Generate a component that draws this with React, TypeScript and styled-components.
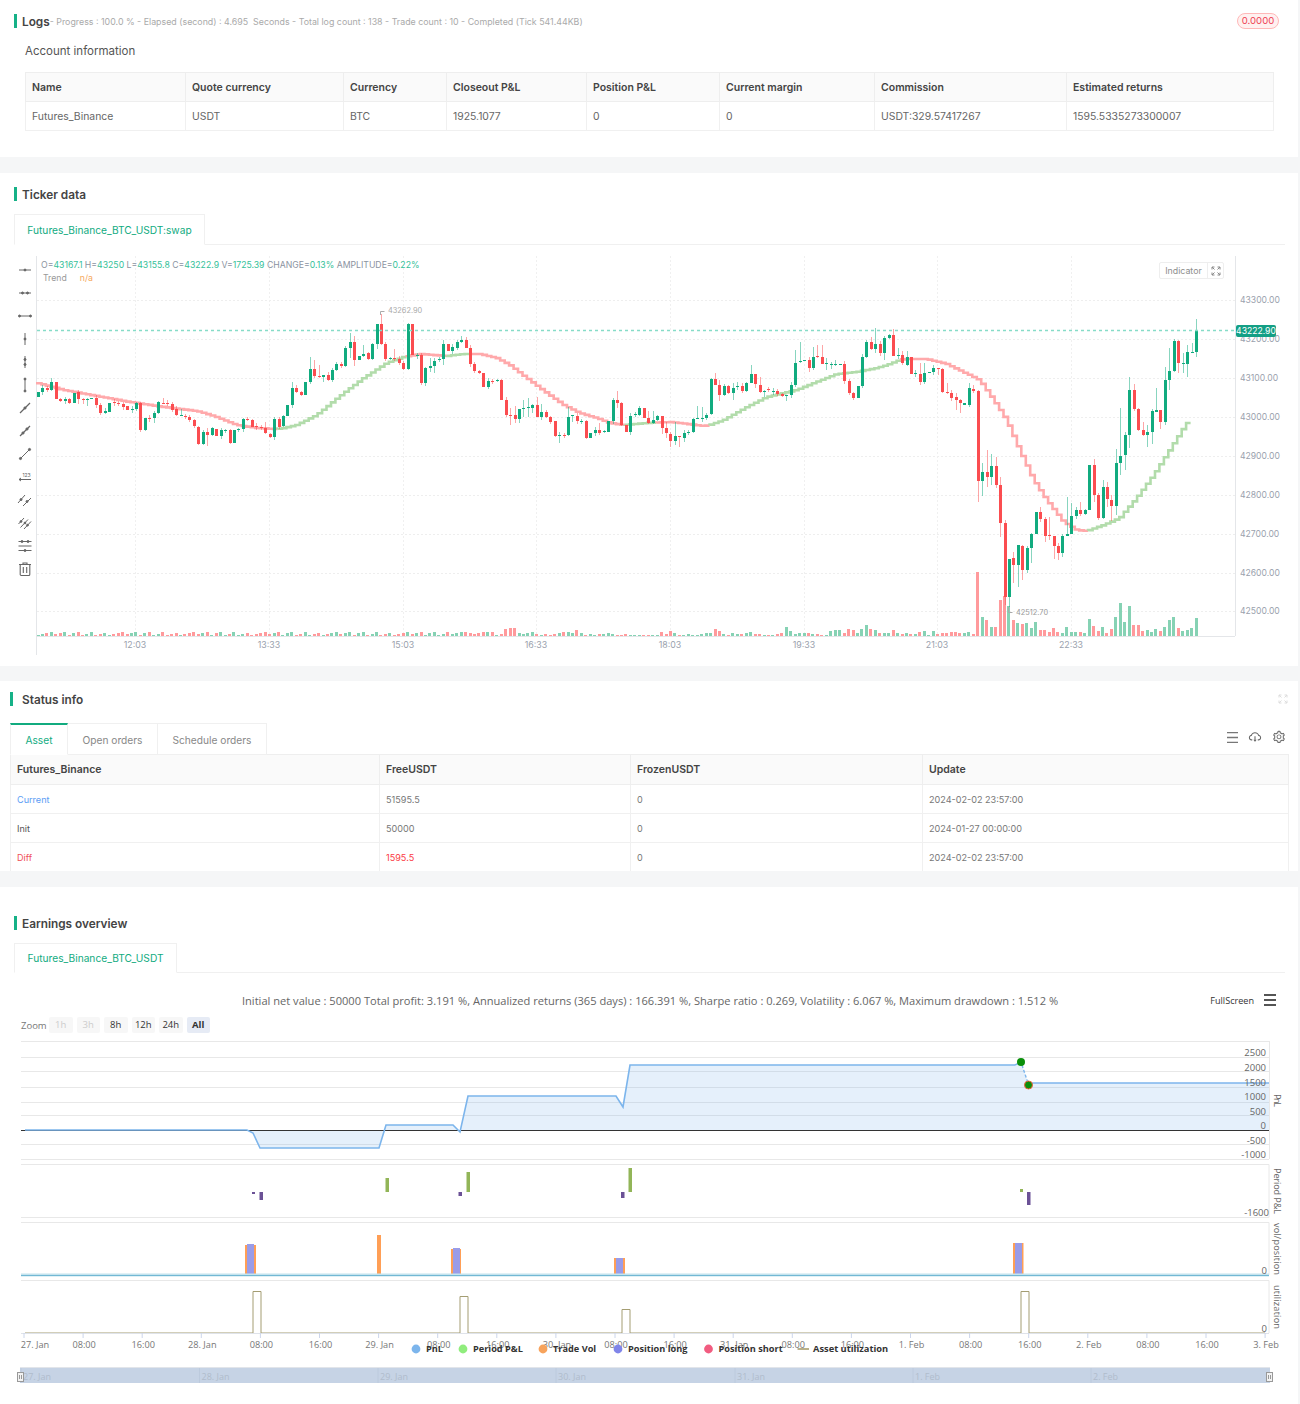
import React from 'react';
import styled, { createGlobalStyle } from 'styled-components';
import { AiOutlineCloudDownload, AiOutlineSetting } from 'react-icons/ai';

const GREEN = '#11ab7f';
const RED = '#fb4d50';
const CHART_FONT = '"Open Sans", "DejaVu Sans", sans-serif';

const GlobalStyle = createGlobalStyle`
  html, body { margin: 0; padding: 0; background: #fff; }
  body { font-family: Inter, "Noto Sans", sans-serif; color: #333; }
`;

/* ---------- candle data, page pixel coordinates: dir top,bottom,wickTop,wickBottom ---------- */
const RAW = `g392,397 g388,392 r388,390 g382,390,378 r382,399 r399,401,398,402 g399,401,397,404 r399,403 g393,403 r392,399,390,404
r399,400,398,404 g399,400,398,406 g398,399 r398,405 r405,413 g411,413,408 g403,412 r402,403 r403,404 r404,407,402,410
r406,410 g409,410 g403,409,402 r403,430,402,432 g418,430,,431 r418,419 g413,418,,423 g402,413 r403,404,398 r403,404,400,406
r404,410,402 r409,415,406,416 g415,416,409 r416,417,414,419 r417,420 r420,426,,428 r427,444,426,445 g432,444,430,445 r432,435,428,446 g428,435,427
r429,436 g430,436,428 g430,431,429 r430,443 g430,443 g429,430,428,432 g419,429,418,432 r419,420,417,421 r420,427,419 r426,427
r427,428 r428,433,422 r434,437,433,438 g419,437,417 r419,427,417 g416,426 g405,416 g388,405,382 r388,392,385,393 r392,395,,396
g382,395 g369,382,357,384 r369,376,360 r376,377,365,378 g375,377,,382 r375,380,,381 g370,380,,382 g364,370,362 r364,366,362,368 g348,366,346,367
g342,348,333,358 r342,360,336,366 g356,360 g354,356,345,357 r353,359,352,360 g344,359,343 g324,344,324,349 r324,344,314,345 r344,359,,361 g358,359
r358,359,349,361 r359,363,,365 r363,369,,370 g324,369 r324,355 g355,356,353 r355,383,,385 g368,383,,386 g366,368,358,372 g361,366,,373
g359,360,,362 g344,359,340,365 r344,351 g347,351 g342,348 g340,342,336 r340,348,337 r348,364 r364,371 r371,373
r373,387 g381,387,,389 r381,382,379 g380,381,379 r380,400,379 r400,415,,417 r415,416,408,425 r415,419,406,423 g409,419,,423 g408,409,400,417
g407,408,398,417 g405,408,,413 r405,417,397 g412,417,404 r412,417,,418 r417,422,,424 r421,436,,437 g435,436,432,443 r435,436,433 g417,435,407
g415,416,,422 r416,421 g421,422 r421,438,420,439 g433,438 g430,433 r430,433,423 g431,432 g421,432,421 g400,421,398
r400,403,391,408 r403,425,,426 r425,432 g416,432 g414,415 g408,415,406 r408,418 r418,423,411,424 g420,423,411,424 g416,420
r416,428,,434 r428,433,422,438 r434,441,,447 g436,441,422,445 r436,437,,447 g433,438,,442 g432,433 g419,432 g418,419,406 g418,419,407
g415,418 g379,414 r379,385,373 r385,395,380,401 g386,395,,396 r386,393 g388,393,383,400 g386,387,382 r386,391,383 g383,391,382
g374,383,365 r374,384,374,388 r385,392,377,393 g391,392,,397 r389,390,387,392 g391,392 r391,394 r394,396 g395,396,,401 g385,395
g363,385,350 g361,362,342,363 g360,361 r360,368,,372 g357,368,347 r356,357,345 r357,364,345 g363,364,358,370 g364,365,,369 g364,365,360
g364,365 r364,381,361 r381,393,,395 r393,398,,400 g386,398 g357,386,,388 g342,357,,358 r342,349,337 g344,349,328,353 r344,353
g338,353,,360 g335,338 r335,356,329 g355,356,348 r355,363,351 g357,365,351 r357,374 g373,374 r374,382,363,385 g373,382,363,384
g372,373 g368,372 r368,369,368,375 r369,392 r392,393,383,394 r393,398 r397,400,393,410 r400,403,,413 g403,405 g388,405,383,407
r389,391,385 r391,481,,502 g472,481,463,496 r472,477,450,487 g466,477,454,485 r466,485,457,488 r485,523,477,537 r523,597,,605 g559,597,559,607 r558,565,552,583
g545,565,,587 r546,570,545,580 g548,570,,573 g534,548,,563 g512,534 r512,519,507 r519,536,,542 r535,536,517,540 r536,546,,559 r546,553,543,560
g536,553,,557 g534,536,497,536 g516,534,503 g510,516 r510,514,502 g510,514 g465,510 r465,495,459,502 r495,518,493 g487,518,480
r487,499,482,507 r500,506,495,521 g463,506,449,515 g456,463,408,475 g435,455,432,470 g390,435,377,448 r390,409,384,411 r409,430 r430,435,422,436 g432,435,425,447
g411,432,,444 g410,412,388,412 r410,422,,429 g380,422,367 g371,380,348,390 g341,371,339 r341,363,340,373 g363,364,353,373 g352,364,345,377 g352,353,343,353
g331,352,319,357`;

const candles = RAW.trim().split(/\s+/).map((token, i) => {
  const [top, bottom, hi, lo] = token.slice(1).split(',');
  return {
    up: token[0] === 'g',
    x: 38 + i * 4.454,
    top: Number(top),
    bottom: Number(bottom),
    hi: hi ? Number(hi) : Number(top) - (i * 7) % 4,
    lo: lo ? Number(lo) : Number(bottom) + (i * 11) % 4,
  };
});

const volMid = [2,3,4,4,3,2,3,4,4,4,1,2,7,8,8,3,2,3,4,2,1,2,1,2,3,4,4,3,6,3,1,2,1,2,2,3,2,1,1,2,1,1,1,1,1,1,1,4,2,5,3,1,1,2,1,1,2,3,3,7,5,2,1,3,2,2,3,4,2,2,1,1,1,2,3,9,5,2,3,3,3,2,2,1,1,5,6,6,3,7];
const volEnd = [6,3,7,11,7,6,3,3,3,6,3,2,3,2,2,4,5,1,5,2,3,3,4,4,3,3,4,2,64,19,16,9,9,36,40,30,16,13,12,13,8,14,6,6,4,8,4,3,9,4,4,4,3,17,10,5,9,3,7,19,33,14,30,11,11,5,6,4,7,5,9,16,19,8,5,6,8,18];
const volumes = candles.map((_, i) => {
  if (i < 93) return 1 + ((i * 5 + (i >> 2)) % 4);
  if (i < 183) return volMid[i - 93] ?? 2;
  return volEnd[i - 183] ?? 2;
});

// trend line key points, page pixels
const trendKeys: [number, number][] = [
  [37,382],[67,390],[133,402],[167,407],[200,411],[217,416],[240,425],[260,428],[280,429],[287,428],[300,425],[320,415],[347,393],[367,378],[390,363],[407,357],
  [423,354],[450,356],[467,354],[483,354],[500,358],[513,365],[530,378],[550,393],[567,405],[583,413],[600,418],[613,423],[627,425],[650,423],[673,422],[683,423],
  [707,426],[713,425],[727,420],[750,407],[770,397],[800,390],[817,383],[840,374],[860,372],[880,368],[890,365],[903,360],[907,359],[930,359],[950,364],[983,380],
  [997,400],[1010,420],[1023,450],[1037,480],[1050,500],[1067,522],[1080,530],[1090,531],[1107,525],[1123,518],[1140,498],[1157,475],[1173,450],[1190,423],
];
const greenParts: [number, number][] = [[280,410],[450,470],[627,660],[710,905],[1090,1191]];

const trendY = (x: number) => {
  for (let k = 1; k < trendKeys.length; k++) {
    const [x0, y0] = trendKeys[k - 1];
    const [x1, y1] = trendKeys[k];
    if (x <= x1) return y0 + ((y1 - y0) * (x - x0)) / (x1 - x0);
  }
  return trendKeys[trendKeys.length - 1][1];
};

const trendParts = (() => {
  const parts: { green: boolean; d: string }[] = [];
  let last: { green: boolean; d: string } | null = null;
  let prevX = 37;
  let prevY = trendY(37);
  for (let x = 37; x < 1191; x += 4.454) {
    const green = greenParts.some(([a, b]) => x >= a && x < b);
    const y = trendY(x);
    if (!last || last.green !== green) {
      last = { green, d: `M${prevX.toFixed(1)} ${prevY.toFixed(1)}` };
      parts.push(last);
    }
    last.d += `V${y.toFixed(1)}H${x.toFixed(1)}`;
    prevX = x;
    prevY = y;
  }
  return parts;
})();

/* ---------- page ---------- */
const Page = styled.div`
  width: 1300px;
  background: #f5f6f7;
`;
const Panel = styled.section<{ $height: number; $gap?: number }>`
  width: 1298px;
  background: #fff;
  height: ${p => p.$height}px;
  margin-bottom: ${p => p.$gap ?? 0}px;
  overflow: hidden;
`;
const TitleRow = styled.div<{ $top: number; $left?: number }>`
  display: flex;
  align-items: center;
  height: 16px;
  margin-top: ${p => p.$top}px;
  padding-left: ${p => p.$left ?? 14}px;
`;
const TitleBar = styled.i<{ $space?: number }>`
  width: 3px;
  height: 14px;
  background: #16b187;
  margin-right: ${p => p.$space ?? 5}px;
`;
const Title = styled.h2`
  margin: 0;
  padding-top: 1px;
  font-size: 11.8px;
  font-weight: 600;
  color: #444;
`;
const Progress = styled.span`
  font-size: 8.85px;
  color: #aaa;
  white-space: pre;
`;
const Badge = styled.span`
  margin-left: auto;
  margin-right: 19px;
  width: 42px;
  height: 16px;
  box-sizing: border-box;
  border: 1px solid #ffb8b8;
  border-radius: 8px;
  background: #fff1f0;
  color: #ee4455;
  font-size: 9.6px;
  line-height: 14px;
  text-align: center;
`;
const SubTitle = styled.div`
  margin: 15px 0 13px 25px;
  font-size: 11.5px;
  line-height: 15px;
  color: #555;
`;
const Table = styled.table<{ $left: number; $width: number }>`
  margin-left: ${p => p.$left}px;
  width: ${p => p.$width}px;
  table-layout: fixed;
  border-collapse: collapse;
`;
const Th = styled.th<{ $height: number }>`
  height: ${p => p.$height}px;
  padding: 0 6px;
  text-align: left;
  font-weight: 600;
  font-size: 10.5px;
  color: #444;
  background: #fafafa;
  border: 1px solid #eee;
`;
const Td = styled.td<{ $height: number; $tone?: string; $size?: number }>`
  height: ${p => p.$height}px;
  padding: 0 6px;
  font-size: ${p => p.$size ?? 10.4}px;
  color: ${p => p.$tone ?? '#666'};
  border: 1px solid #f0f0f0;
`;
const CardTabs = styled.div<{ $top: number }>`
  display: flex;
  margin: ${p => p.$top}px 13px 0 14px;
  border-bottom: 1px solid #f0f0f0;
`;
const CardTab = styled.div<{ $width: number; $height: number; $active?: boolean; $first?: boolean; $line?: boolean; $nudge?: number }>`
  box-sizing: border-box;
  width: ${p => p.$width}px;
  height: ${p => p.$height}px;
  margin-bottom: -1px;
  padding-top: ${p => p.$nudge ?? 0}px;
  display: flex;
  align-items: center;
  justify-content: center;
  font-size: 10.2px;
  color: ${p => (p.$active ? GREEN : '#888')};
  background: #fff;
  border: 1px solid #f0f0f0;
  border-left-width: ${p => (p.$first ? 1 : 0)}px;
  border-top: ${p => (p.$line ? `2px solid ${GREEN}` : '1px solid #f0f0f0')};
  border-bottom-color: ${p => (p.$active ? '#fff' : '#f0f0f0')};
`;

/* ---------- ticker chart ---------- */
const ChartRow = styled.div`
  display: flex;
  padding-left: 14px;
`;
const ToolRail = styled.div`
  width: 22px;
  padding-top: 17px;
  display: flex;
  flex-direction: column;
  align-items: center;
  gap: 7px;
`;
const ToolSvg = styled.svg`
  width: 16px;
  height: 16px;
  flex: none;
  fill: none;
  stroke: #666;
  stroke-width: 1;
`;
const ChartCanvas = styled.div`
  position: relative;
  width: 1248px;
  height: 415px;
`;
const ChartSvg = styled.svg`
  display: block;
  font-family: Inter, sans-serif;
`;
const Ohlc = styled.div`
  position: absolute;
  left: 5px;
  top: 14px;
  font-size: 8.7px;
  line-height: 13px;
  color: #8b93a1;
  white-space: pre;
`;
const OhlcValue = styled.span`
  color: #35c199;
`;
const TrendLabel = styled.div`
  padding-left: 2px;
  color: #999;
`;
const TrendValue = styled.span`
  color: #f5a95c;
  margin-left: 13px;
`;
const IndicatorBox = styled.div`
  position: absolute;
  left: 1123px;
  top: 17px;
  width: 65px;
  height: 17px;
  box-sizing: border-box;
  border: 1px solid #eee;
  border-radius: 2px;
  display: flex;
  align-items: center;
  background: #fff;
  font-size: 8.8px;
  color: #8d8d8d;
`;
const IndicatorText = styled.span`
  width: 47px;
  text-align: center;
  border-right: 1px solid #eee;
  line-height: 15px;
`;
const IndicatorIcon = styled.span`
  display: flex;
  margin-left: 3px;
`;

/* ---------- status ---------- */
const StatusTabRow = styled.div`
  position: relative;
  margin-top: 16px;
  padding-left: 10px;
  display: flex;
`;
const TableTools = styled.div`
  position: absolute;
  right: 12px;
  top: 7px;
  display: flex;
  align-items: center;
  gap: 10px;
  font-size: 14px;
  color: #666;
`;
const FadedExpand = styled.svg`
  margin-left: auto;
  margin-right: 10px;
  width: 10px;
  height: 10px;
  fill: none;
  stroke: #ddd;
`;

/* ---------- earnings ---------- */
const StatRow = styled.div`
  display: grid;
  grid-template-columns: 1fr auto 1fr;
  align-items: center;
  height: 16px;
  margin-top: 19px;
  padding-left: 2px;
  font-family: ${CHART_FONT};
  font-size: 11.1px;
  color: #666;
`;
const FullScreen = styled.div`
  justify-self: end;
  display: flex;
  align-items: center;
  gap: 10px;
  margin-right: 22px;
  font-size: 9.1px;
  color: #333;
`;
const ZoomRow = styled.div`
  display: flex;
  align-items: center;
  gap: 4px;
  height: 16px;
  margin: 9px 0 0 21px;
  font-family: ${CHART_FONT};
  font-size: 9.5px;
  color: #777;
`;
const ZoomLabel = styled.span`
  width: 24px;
`;
const ZoomButton = styled.span<{ $off?: boolean; $on?: boolean }>`
  width: 23.5px;
  height: 16px;
  line-height: 16px;
  text-align: center;
  border-radius: 2px;
  background: ${p => (p.$on ? '#e6ebf5' : '#f7f7f7')};
  color: ${p => (p.$off ? '#ccc' : '#333')};
  font-weight: ${p => (p.$on ? 700 : 400)};
`;
const EarnSvg = styled.svg`
  display: block;
  margin-top: 4px;
  font-family: ${CHART_FONT};
`;

const icons: React.ReactNode[] = [
  <><path d="M2 8h12" /><circle cx="8" cy="8" r="1" fill="#666" /></>,
  <><path d="M2 8h12" /><circle cx="5.5" cy="8" r="1" fill="#666" /><circle cx="10.5" cy="8" r="1" fill="#666" /></>,
  <><path d="M2 8h12" /><circle cx="2.5" cy="8" r="1" fill="#666" /><circle cx="13.5" cy="8" r="1" fill="#666" /></>,
  <><path d="M8 2v12" /><circle cx="8" cy="8" r="1" fill="#666" /></>,
  <><path d="M8 2v12" /><circle cx="8" cy="5.5" r="1" fill="#666" /><circle cx="8" cy="10.5" r="1" fill="#666" /></>,
  <><path d="M8 1.5v13" /><circle cx="8" cy="2" r="1" fill="#666" /><circle cx="8" cy="14" r="1" fill="#666" /></>,
  <><path d="M3 13L13 3" strokeWidth="1.2" /><circle cx="8" cy="8" r="1.1" fill="#666" /></>,
  <><path d="M3 13L13 3" strokeWidth="1.2" /><circle cx="6" cy="10" r="1.1" fill="#666" /><circle cx="10" cy="6" r="1.1" fill="#666" /></>,
  <><path d="M3.5 12.5L12.5 3.5" /><circle cx="3.5" cy="12.5" r="1.1" fill="#666" /><circle cx="12.5" cy="3.5" r="1.1" fill="#666" /></>,
  <><path d="M2 10.5h12M2 10.5l2-1.5M2 10.5l2 1.5" /><text x="5.5" y="7.5" fontSize="5" fill="#666" stroke="none" fontFamily="Inter, sans-serif">123</text></>,
  <><path d="M1 11L8 3M6 14l8-8" /><circle cx="4" cy="7.6" r="1" fill="#666" /><circle cx="10" cy="9.5" r="1" fill="#666" /></>,
  <><path d="M1.5 9L7 3M3.5 12.5L11 4.5M7 14l7-7.5" /><circle cx="4" cy="6.5" r=".9" fill="#666" /><circle cx="8" cy="8" r=".9" fill="#666" /><circle cx="10.5" cy="10.2" r=".9" fill="#666" /></>,
  <><path d="M1.5 3.5h13M1.5 8h13M1.5 12.5h13" /><circle cx="5" cy="3.5" r="1" fill="#666" /><circle cx="11" cy="3.5" r="1" fill="#666" /><circle cx="8" cy="12.5" r="1" fill="#666" /></>,
  <><path d="M2 3.5h12M6 3.5V2h4v1.5M3.2 3.5v10a1 1 0 0 0 1 1h7.6a1 1 0 0 0 1-1v-10M6.3 6v6M9.7 6v6" strokeWidth="1.1" /></>,
];

const ExpandGlyph = ({ color = '#888' }: { color?: string }) => (
  <svg width={10} height={10} viewBox="0 0 10 10" fill="none" stroke={color} strokeWidth="1">
    <path d="M1 3.5V1h2.5M1 1l2.5 2.5M9 3.5V1H6.5M9 1L6.5 3.5M1 6.5V9h2.5M1 9l2.5-2.5M9 6.5V9H6.5M9 9L6.5 6.5" />
  </svg>
);

const Bars = ({ width, weight, color }: { width: number; weight: number; color: string }) => (
  <svg width={width} height={width} viewBox={`0 0 ${width} ${width}`} stroke={color} strokeWidth={weight}>
    <path d={`M0 ${weight / 2}H${width}M0 ${width / 2}H${width}M0 ${width - weight / 2}H${width}`} />
  </svg>
);

const verticals = [135, 269, 403, 536, 670, 804, 937, 1071];
const timeLabels = ['12:03', '13:33', '15:03', '16:33', '18:03', '19:33', '21:03', '22:33'];
const priceLines = [300, 339, 378, 417, 456, 495, 534, 573, 611].map((y, i) => ({ y, label: `${43300 - i * 100}.00` }));

const TickerChart = () => (
  <ChartRow>
    <ToolRail>
      {icons.map((icon, i) => (
        <ToolSvg key={i} viewBox="0 0 16 16">{icon}</ToolSvg>
      ))}
    </ToolRail>
    <ChartCanvas>
      <ChartSvg width={1248} height={415} viewBox="36 245 1248 415">
        <path d="M36.5 256V655M1235.5 256V636M37 636.5H1235" stroke="#e4e6e9" fill="none" />
        {priceLines.map(l => (
          <g key={l.y}>
            <path d={`M37 ${l.y + 0.5}H1235`} stroke="#eeeeee" strokeDasharray="2 2" />
            <text x={1240} y={l.y + 3} fontSize={8.6} fill="#9aa1ad">{l.label}</text>
          </g>
        ))}
        {verticals.map((x, i) => (
          <g key={x}>
            <path d={`M${x + 0.5} 256V636`} stroke="#f0f0f0" strokeDasharray="2 2" />
            <text x={x} y={648} fontSize={8.8} fill="#9aa1ad" textAnchor="middle">{timeLabels[i]}</text>
          </g>
        ))}
        {candles.map((c, i) => (
          <rect key={i} x={Math.round(c.x - 1.5)} y={636 - volumes[i]} width={3} height={volumes[i]} fill={c.up ? '#86d2b4' : '#ff9a9c'} />
        ))}
        <g fill="none" strokeWidth="2.6">
          {trendParts.map((p, i) => (
            <path key={i} d={p.d} stroke={p.green ? '#b2dcab' : '#ffa9ab'} />
          ))}
        </g>
        {candles.map((c, i) => (
          <g key={i} fill={c.up ? GREEN : RED}>
            <rect x={Math.round(c.x)} y={c.hi} width={1} height={c.lo - c.hi} opacity={0.5} />
            <rect x={Math.round(c.x) - 1} y={c.top} width={3} height={c.bottom - c.top} />
          </g>
        ))}
        <path d="M37 330.5H1236" stroke="#86dcc8" strokeWidth={1.3} strokeDasharray="3 3" />
        <rect x={1236} y={325} width={40} height={12} rx={2} fill="#149f85" />
        <text x={1256} y={334} fontSize={8.6} fill="#fff" textAnchor="middle">43222.90</text>
        <path d="M380.5 315v-3.5h4" stroke="#aaa" fill="none" />
        <text x={388} y={313} fontSize={7.4} fill="#aaa">43262.90</text>
        <path d="M1008.5 607v5.5h4" stroke="#aaa" fill="none" />
        <text x={1016} y={615} fontSize={7.4} fill="#999">42512.70</text>
      </ChartSvg>
      <Ohlc>
        O=<OhlcValue>43167.1</OhlcValue> H=<OhlcValue>43250</OhlcValue> L=<OhlcValue>43155.8</OhlcValue> C=<OhlcValue>43222.9</OhlcValue> V=<OhlcValue>1725.39</OhlcValue> CHANGE=<OhlcValue>0.13%</OhlcValue> AMPLITUDE=<OhlcValue>0.22%</OhlcValue>
        <TrendLabel>Trend<TrendValue>n/a</TrendValue></TrendLabel>
      </Ohlc>
      <IndicatorBox>
        <IndicatorText>Indicator</IndicatorText>
        <IndicatorIcon><ExpandGlyph /></IndicatorIcon>
      </IndicatorBox>
    </ChartCanvas>
  </ChartRow>
);

const hTicks = ['27. Jan','08:00','16:00','28. Jan','08:00','16:00','29. Jan','08:00','16:00','30. Jan','08:00','16:00','31. Jan','08:00','16:00','1. Feb','08:00','16:00','2. Feb','08:00','16:00','3. Feb'];
const pnlLines = [1041, 1057, 1071, 1087, 1102, 1115, 1144, 1159];
const pnlLabels: [string, number][] = [['2500',1056],['2000',1071],['1500',1086],['1000',1100],['500',1115],['0',1129],['-500',1144],['-1000',1158]];
const pnlPath = 'M25 1130H247L253 1133L260 1148H379L386 1125H453L460 1132L468 1096H616L623 1107L630 1065H1015';
const volumeBars = [[245,11,1245,247,7,1244],[377,4,1235],[451,10,1249,453,7,1248],[614,11,1258,616,7,1258],[1013,10.5,1243,1015,7,1243]];
const panelTitles: [string, number, number, number][] = [['PnL',1274,1094,13],['Period P&L',1274,1168,46],['vol/position',1274,1223,52],['utilization',1274,1285,44]];
const legend: [string, number, string][] = [['PnL',416,'#7cb5ec'],['Period P&L',463,'#90ed7d'],['Trade Vol',543,'#f7a35c'],['Position long',618,'#8085e9'],['Position short',708.5,'#f15c80']];
const navLabels: [string, number][] = [['27. Jan',23],['28. Jan',201.5],['29. Jan',380],['30. Jan',558],['31. Jan',737],['1. Feb',915],['2. Feb',1093]];

const EarningsChart = () => (
  <EarnSvg width={1298} height={363} viewBox="0 1037 1298 363">
    {pnlLines.map(y => <path key={y} d={`M21 ${y + 0.5}H1269`} stroke="#e8e8e8" />)}
    <path d="M21 1164.5H1269V1217.5H21M21 1222.5H1269V1275M21 1280.5H1269V1333M1269.5 1041V1159" stroke="#e8e8e8" fill="none" />
    <path d={`${pnlPath}L1021 1062L1028 1083H1269V1130H468V1130H386V1130H260V1130Z`} fill="#7cb5ec" fillOpacity={0.2} stroke="none" />
    <path d="M21 1130.5H1269" stroke="#333" />
    <path d={pnlPath} stroke="#7cb5ec" strokeWidth={1.6} fill="none" />
    <path d="M1015 1065L1021 1062L1028 1083" stroke="#7cb5ec" strokeWidth={1.4} strokeDasharray="3 2" fill="none" />
    <path d="M1028 1083H1269" stroke="#7cb5ec" strokeWidth={1.6} fill="none" />
    <circle cx={1021} cy={1062} r={4} fill="#0a8f0a" />
    <circle cx={1028.5} cy={1085} r={4} fill="#0a8f0a" stroke="#f0603a" />
    {pnlLabels.map(([t, y]) => <text key={t} x={1266} y={y} fontSize={9.5} fill="#666" textAnchor="end">{t}</text>)}
    {panelTitles.map(([t, x, y, len]) => (
      <text key={t} transform={`translate(${x} ${y}) rotate(90)`} fontSize={9.2} fill="#666" textLength={len} lengthAdjust="spacing">{t}</text>
    ))}

    {[[385.5,1178],[466.5,1172],[628.5,1168],[1020,1189]].map(([x, y]) => (
      <rect key={x} x={x} y={y} width={x === 1020 ? 3 : 3.5} height={1192 - y} fill="#92b558" />
    ))}
    {[[252,1194,3],[259.5,1200,3.5],[458.5,1196,3.5],[621,1198,3.5],[1027,1205,3.5]].map(([x, y, w]) => (
      <rect key={x} x={x} y={1192} width={w} height={y - 1192} fill="#6b5196" />
    ))}
    <text x={1269} y={1216} fontSize={9.5} fill="#666" textAnchor="end">-1600</text>

    {volumeBars.map(b => (
      <g key={b[0]}>
        <rect x={b[0]} y={b[2]} width={b[1]} height={1275 - b[2]} fill="#ff9f56" />
        {b.length > 3 && <rect x={b[3]} y={b[5]} width={b[4]} height={1275 - b[5]} fill="#9a9ce8" />}
      </g>
    ))}
    <path d="M21 1275H1269" stroke="#c4e3ee" strokeWidth={3} />
    <path d="M21 1275.5H1269" stroke="#72b8d4" />
    <text x={1267} y={1274} fontSize={9.5} fill="#666" textAnchor="end">0</text>

    <path d="M25 1333H253V1291.5H261V1333H460V1296.5H468V1333H622V1309.5H630V1333H1021V1291.5H1029V1333H1265" stroke="#a49d72" fill="none" />
    <text x={1267} y={1332} fontSize={9.5} fill="#666" textAnchor="end">0</text>
    <path d="M21 1333.5H1269" stroke="#dfe3ea" />

    {hTicks.map((t, i) => {
      const x = 24 + i * 59.1;
      return (
        <g key={i}>
          <path d={`M${x} 1333V1338`} stroke="#ccd6eb" />
          <text x={i === 0 ? 35 : x + 1} y={1348} fontSize={9.2} fill="#777" textAnchor="middle">{t}</text>
        </g>
      );
    })}

    {legend.map(([t, x, c]) => (
      <g key={t}>
        <circle cx={x} cy={1349} r={4.4} fill={c} />
        <text x={x + 10} y={1352} fontSize={9.2} fontWeight={700} fill="#333">{t}</text>
      </g>
    ))}
    <path d="M797.5 1349H809" stroke="#b8b08a" strokeWidth={2} />
    <text x={813} y={1352} fontSize={9.3} fontWeight={700} fill="#333">Asset utilization</text>

    <rect x={20} y={1368} width={1250} height={15} fill="#c6d3e5" />
    <path d="M20 1367.5H1270" stroke="#e2e5ea" />
    {navLabels.map(([t, x]) => (
      <g key={t}>
        <path d={`M${x - 2} 1368V1383`} stroke="#bccadd" />
        <text x={x} y={1380} fontSize={9} fill="#b0bccc">{t}</text>
      </g>
    ))}
    <g fill="#f2f2f2" stroke="#999">
      <rect x={17.5} y={1372.5} width={6} height={9} />
      <rect x={1266.5} y={1372.5} width={6} height={9} />
    </g>
    <path d="M19.5 1375v4M21.5 1375v4M1268.5 1375v4M1270.5 1375v4" stroke="#999" />
  </EarnSvg>
);

const accountCols = [160, 158, 103, 140, 133, 155, 192, 207];
const accountHead = ['Name', 'Quote currency', 'Currency', 'Closeout P&L', 'Position P&L', 'Current margin', 'Commission', 'Estimated returns'];
const accountRow = ['Futures_Binance', 'USDT', 'BTC', '1925.1077', '0', '0', 'USDT:329.57417267', '1595.5335273300007'];
const statusCols = [369, 251, 292, 366];
const statusHead = ['Futures_Binance', 'FreeUSDT', 'FrozenUSDT', 'Update'];
const statusRows: { name: string; tone: string; free: string; freeTone: string; date: string }[] = [
  { name: 'Current', tone: '#5c9df5', free: '51595.5', freeTone: '#777', date: '2024-02-02 23:57:00' },
  { name: 'Init', tone: '#555', free: '50000', freeTone: '#777', date: '2024-01-27 00:00:00' },
  { name: 'Diff', tone: '#f0525a', free: '1595.5', freeTone: '#fb3b45', date: '2024-02-02 23:57:00' },
];

export default function App() {
  return (
    <Page>
      <GlobalStyle />
      <Panel $height={157} $gap={16}>
        <TitleRow $top={13}>
          <TitleBar />
          <Title>Logs</Title>
          <Progress>- Progress : 100.0 % - Elapsed (second) : 4.695  Seconds - Total log count : 138 - Trade count : 10 - Completed (Tick 541.44KB)</Progress>
          <Badge>0.0000</Badge>
        </TitleRow>
        <SubTitle>Account information</SubTitle>
        <Table $left={25} $width={1248}>
          <colgroup>{accountCols.map((w, i) => <col key={i} width={w} />)}</colgroup>
          <thead><tr>{accountHead.map(h => <Th key={h} $height={28}>{h}</Th>)}</tr></thead>
          <tbody><tr>{accountRow.map((c, i) => <Td key={i} $height={28}>{c}</Td>)}</tr></tbody>
        </Table>
      </Panel>

      <Panel $height={493} $gap={15}>
        <TitleRow $top={13}><TitleBar /><Title>Ticker data</Title></TitleRow>
        <CardTabs $top={12}>
          <CardTab $width={191} $height={31} $active $first>Futures_Binance_BTC_USDT:swap</CardTab>
        </CardTabs>
        <TickerChart />
      </Panel>

      <Panel $height={190} $gap={16}>
        <TitleRow $top={10} $left={10}>
          <TitleBar $space={9} />
          <Title>Status info</Title>
          <FadedExpand viewBox="0 0 10 10"><path d="M1 3.5V1h2.5M1 1l2.5 2.5M9 3.5V1H6.5M9 1L6.5 3.5M1 6.5V9h2.5M1 9l2.5-2.5M9 6.5V9H6.5M9 9L6.5 6.5" /></FadedExpand>
        </TitleRow>
        <StatusTabRow>
          <CardTab $width={58} $height={32} $active $first $line $nudge={1}>Asset</CardTab>
          <CardTab $width={90} $height={32} $nudge={1}>Open orders</CardTab>
          <CardTab $width={109} $height={32} $nudge={1}>Schedule orders</CardTab>
          <TableTools>
            <Bars width={11} weight={1.3} color="#777" />
            <AiOutlineCloudDownload />
            <AiOutlineSetting />
          </TableTools>
        </StatusTabRow>
        <Table $left={10} $width={1278}>
          <colgroup>{statusCols.map((w, i) => <col key={i} width={w} />)}</colgroup>
          <thead><tr>{statusHead.map(h => <Th key={h} $height={29}>{h}</Th>)}</tr></thead>
          <tbody>
            {statusRows.map(r => (
              <tr key={r.name}>
                <Td $height={28} $tone={r.tone} $size={9.1}>{r.name}</Td>
                <Td $height={28} $tone={r.freeTone} $size={9.1}>{r.free}</Td>
                <Td $height={28} $tone="#777" $size={9.1}>0</Td>
                <Td $height={28} $tone="#777" $size={9.1}>{r.date}</Td>
              </tr>
            ))}
          </tbody>
        </Table>
      </Panel>

      <Panel $height={517}>
        <TitleRow $top={28}><TitleBar /><Title>Earnings overview</Title></TitleRow>
        <CardTabs $top={12}>
          <CardTab $width={163} $height={30} $active $first>Futures_Binance_BTC_USDT</CardTab>
        </CardTabs>
        <StatRow>
          <span />
          <span>Initial net value : 50000 Total profit: 3.191 %, Annualized returns (365 days) : 166.391 %, Sharpe ratio : 0.269, Volatility : 6.067 %, Maximum drawdown : 1.512 %</span>
          <FullScreen>FullScreen<Bars width={12} weight={2} color="#555" /></FullScreen>
        </StatRow>
        <ZoomRow>
          <ZoomLabel>Zoom</ZoomLabel>
          <ZoomButton $off>1h</ZoomButton>
          <ZoomButton $off>3h</ZoomButton>
          <ZoomButton>8h</ZoomButton>
          <ZoomButton>12h</ZoomButton>
          <ZoomButton>24h</ZoomButton>
          <ZoomButton $on>All</ZoomButton>
        </ZoomRow>
        <EarningsChart />
      </Panel>
    </Page>
  );
}
